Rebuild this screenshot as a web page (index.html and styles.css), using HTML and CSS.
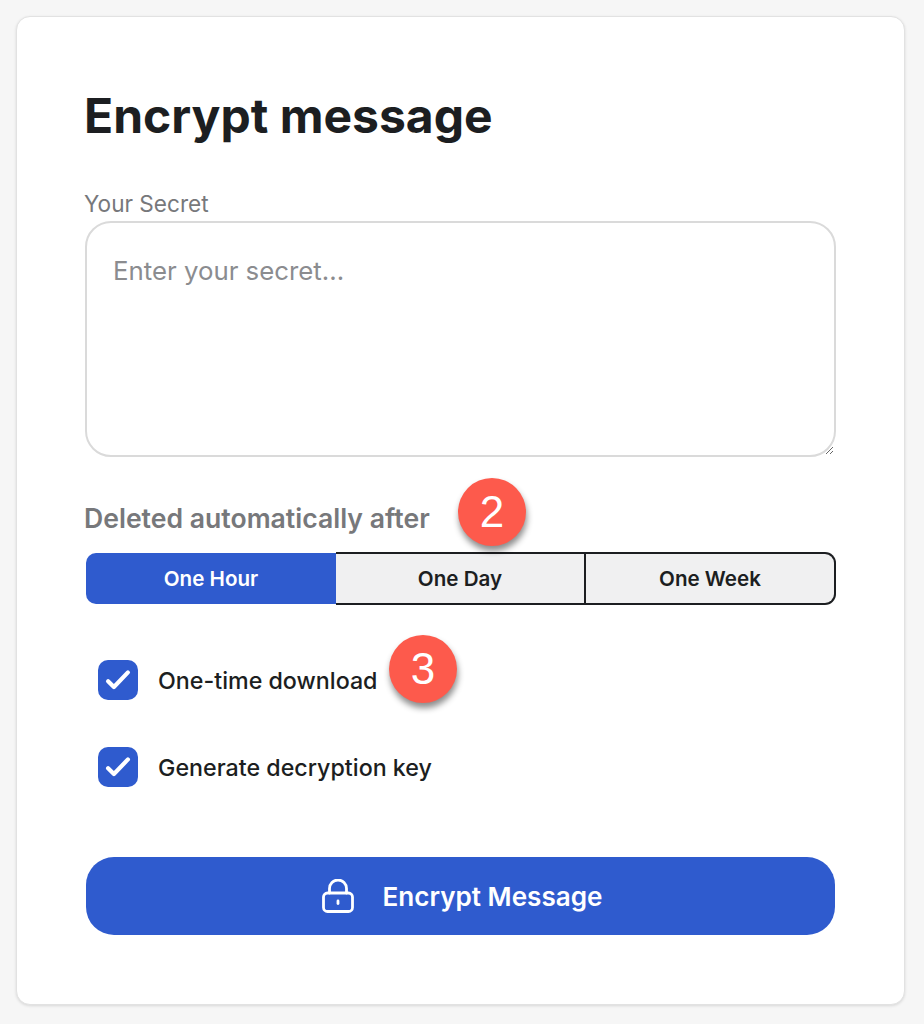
FILE: index.html
```html
<!DOCTYPE html>
<html lang="en">
<head>
  <meta charset="UTF-8">
  <title>Encrypt message</title>
  <link rel="stylesheet" href="styles.css">
</head>
<body>
  <div class="card">
    <h1>Encrypt message</h1>

    <label class="field-label" for="secret">Your Secret</label>
    <textarea id="secret" class="secret" placeholder="Enter your secret..."></textarea>

    <div class="expiry">
      <h2>Deleted automatically after</h2>
      <span class="badge badge-two">2</span>
      <div class="segments">
        <button class="segment active">One Hour</button>
        <button class="segment">One Day</button>
        <button class="segment">One Week</button>
      </div>
    </div>

    <div class="options">
      <div class="option">
        <span class="check">
          <svg viewBox="0 0 24 24" width="28" height="28"><path d="M3.5 13l5 5L20.5 5.5" fill="none" stroke="#fff" stroke-width="3.6" stroke-linecap="round" stroke-linejoin="round"/></svg>
        </span>
        <span>One-time download</span>
        <span class="badge badge-three">3</span>
      </div>
      <div class="option">
        <span class="check">
          <svg viewBox="0 0 24 24" width="28" height="28"><path d="M3.5 13l5 5L20.5 5.5" fill="none" stroke="#fff" stroke-width="3.6" stroke-linecap="round" stroke-linejoin="round"/></svg>
        </span>
        <span>Generate decryption key</span>
      </div>
    </div>

    <button class="submit">
      <svg viewBox="0 0 32 34" width="32" height="34" fill="none" stroke="#fff" stroke-width="2.8" stroke-linecap="round">
        <rect x="1.5" y="14" width="29" height="18.5" rx="4"/>
        <path d="M7.5 14V9.5a8.5 8.5 0 0 1 17 0V14"/>
        <path d="M16 22v2.5"/>
      </svg>
      <span>Encrypt Message</span>
    </button>
  </div>
</body>
</html>
```

FILE: styles.css
```css
* {
  box-sizing: border-box;
}

body {
  margin: 0;
  padding: 16px 19px 19px 16px;
  font-family: Inter, "Liberation Sans", sans-serif;
  background-color: #f6f6f6;
  color: #1c1e21;
}

.card {
  height: 989px;
  padding: 67px 68px 0 68px;
  background-color: #fff;
  border: 1px solid #e2e2e2;
  border-radius: 14px;
  box-shadow: 0 1px 3px rgba(0, 0, 0, 0.12);
}

h1 {
  margin: 0 0 42px -1px;
  font-size: 48px;
  line-height: 64px;
  font-weight: 700;
}

.field-label {
  display: block;
  margin-left: -1px;
  font-size: 22.6px;
  line-height: 28px;
  color: #77787b;
}

.secret {
  display: block;
  width: 751px;
  height: 236px;
  margin-top: 3px;
  padding: 31px 26px;
  font-family: inherit;
  font-size: 25.8px;
  line-height: 34px;
  color: #1c1e21;
  background: #fff;
  border: 2px solid #dadada;
  border-radius: 26px;
  outline: none;
}

.secret::placeholder {
  color: #8b8c8f;
}

.expiry {
  position: relative;
  margin-top: 43px;
}

h2 {
  margin: 0 0 16px -1px;
  font-size: 26.6px;
  line-height: 36px;
  font-weight: 600;
  color: #77787b;
}

.segments {
  display: flex;
  width: 750px;
  height: 53px;
  margin-left: 1px;
}

.segment {
  flex: 0 0 250px;
  padding: 0;
  font-family: inherit;
  font-size: 20.6px;
  font-weight: 600;
  color: #1c1e21;
  background-color: #f0f0f1;
  border: 2px solid #1c1e21;
  border-left: 0;
}

.segment:last-child {
  border-radius: 0 11px 11px 0;
}

.segment.active {
  color: #fff;
  background-color: #2f5bce;
  border: 0;
  border-radius: 10px 0 0 10px;
  margin: 1px 0;
}

.options {
  margin-top: 55px;
  padding-left: 13px;
}

.option {
  position: relative;
  display: flex;
  align-items: center;
  gap: 20px;
  height: 40px;
  margin-bottom: 47px;
  font-size: 23.25px;
  font-weight: 500;
}

.check {
  display: flex;
  align-items: center;
  justify-content: center;
  width: 40px;
  height: 40px;
  background-color: #2f5bce;
  border-radius: 10px;
}

.submit {
  display: flex;
  align-items: center;
  justify-content: center;
  gap: 28px;
  width: 749px;
  height: 78px;
  margin: 70px 0 0 1px;
  padding: 0 0 0 4px;
  font-family: inherit;
  font-size: 26.1px;
  font-weight: 600;
  color: #fff;
  background-color: #2f5bce;
  border: 0;
  border-radius: 28px;
}

/* numbered callouts on top of the form */
.badge {
  position: absolute;
  width: 68px;
  height: 68px;
  font-family: "Liberation Sans", Arial, sans-serif;
  font-size: 44px;
  line-height: 68px;
  text-align: center;
  color: #fff;
  background-color: #fd5a4c;
  border-radius: 50%;
  box-shadow: 1px 5px 6px rgba(0, 0, 0, 0.45);
}

.badge-two {
  left: 373px;
  top: -22px;
}

.badge-three {
  left: 291px;
  top: -25px;
}
```
